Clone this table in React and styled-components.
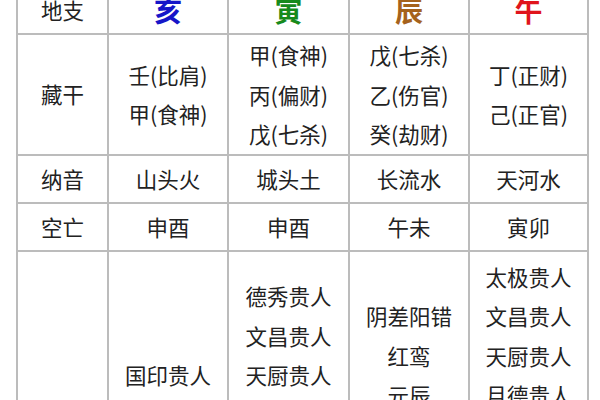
import styled, { createGlobalStyle } from "styled-components";

const GlobalStyle = createGlobalStyle`
  html, body {
    margin: 0;
    padding: 0;
    background: #ffffff;
    overflow: hidden;
  }
  body {
    font-family: "Noto Sans CJK SC", "Noto Sans", sans-serif;
    color: #222222;
  }
`;

const columnWidths = [91, 120, 121, 120, 119];

const branches = [
  { name: "亥", color: "#1616c8" },
  { name: "寅", color: "#178a1c" },
  { name: "辰", color: "#a5621c" },
  { name: "午", color: "#e0141c" },
];

const rows = [
  {
    label: "藏干",
    tall: true,
    cells: [
      ["壬(比肩)", "甲(食神)"],
      ["甲(食神)", "丙(偏财)", "戊(七杀)"],
      ["戊(七杀)", "乙(伤官)", "癸(劫财)"],
      ["丁(正财)", "己(正官)"],
    ],
  },
  { label: "纳音", cells: [["山头火"], ["城头土"], ["长流水"], ["天河水"]] },
  { label: "空亡", cells: [["申酉"], ["申酉"], ["午未"], ["寅卯"]] },
  {
    label: "",
    tall: true,
    padded: true,
    cells: [
      ["国印贵人"],
      ["德秀贵人", "文昌贵人", "天厨贵人", "天乙贵人", "月德贵人"],
      ["阴差阳错", "红鸾", "元辰", "劫煞"],
      ["太极贵人", "文昌贵人", "天厨贵人", "月德贵人", "天德贵人", "金舆"],
    ],
  },
];

const App = () => {
  return (
    <>
      <GlobalStyle />
      <Page>
        <Chart>
          <colgroup>
            {columnWidths.map((w, i) => (
              <Column key={i} $width={w} />
            ))}
          </colgroup>
          <tbody>
            <tr>
              <Cell>地支</Cell>
              {branches.map((b) => (
                <Branch key={b.name} $color={b.color}>
                  {b.name}
                </Branch>
              ))}
            </tr>
            {rows.map((row, i) => (
              <tr key={i}>
                <Cell $tall={row.tall} $padded={row.padded}>
                  {row.label}
                </Cell>
                {row.cells.map((lines, j) => (
                  <Cell key={j} $tall={row.tall} $padded={row.padded}>
                    {lines.map((line, k) => (
                      <Line key={k}>{line}</Line>
                    ))}
                  </Cell>
                ))}
              </tr>
            ))}
          </tbody>
        </Chart>
      </Page>
    </>
  );
};

export default App;

const Page = styled.div`
  padding-left: 16px;
  margin-top: -15px;
`;

const Chart = styled.table`
  width: 571px;
  table-layout: fixed;
  border-collapse: collapse;
  border: 2px solid #bcbcbc;
`;

const Column = styled.col`
  width: ${(props) => props.$width}px;
`;

const Cell = styled.td`
  border: 2px solid #bcbcbc;
  height: ${(props) => (props.$tall ? "auto" : "46px")};
  padding: ${(props) => (props.$padded ? "5px 0" : "0")};
  text-align: center;
  vertical-align: middle;
  font-size: 21.5px;
  line-height: 40px;
  color: #222222;
  white-space: nowrap;
`;

const Branch = styled(Cell)`
  font-size: 28px;
  font-weight: 700;
  color: ${(props) => props.$color};
`;

const Line = styled.div`
  line-height: 39.5px;
`;
